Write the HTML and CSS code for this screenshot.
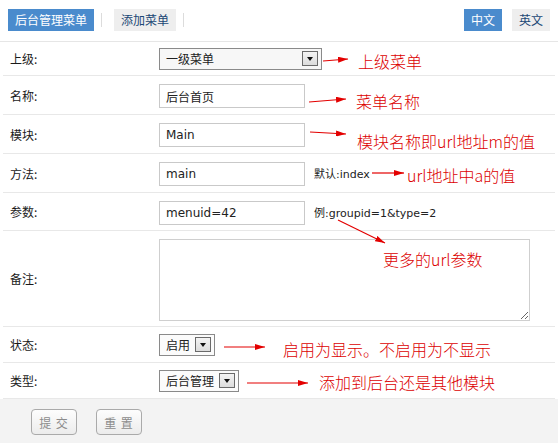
FILE: index.html
```html
<!DOCTYPE html>
<html lang="zh-CN">
<head>
<meta charset="utf-8">
<title>添加菜单</title>
<link rel="stylesheet" href="styles.css">
</head>
<body>
<div class="page">
  <div class="topbar">
    <div class="tabs">
      <a class="tab tab-on">后台管理菜单</a>
      <span class="sep"></span>
      <a class="tab">添加菜单</a>
      <span class="sep"></span>
    </div>
    <div class="langs">
      <a class="tab tab-on">中文</a>
      <a class="tab">英文</a>
    </div>
  </div>

  <div class="form">
    <div class="row row-first">
      <div class="label">上级:</div>
      <div class="field">
        <div class="select select-wide"><span class="select-text">一级菜单</span><span class="select-btn"></span></div>
      </div>
    </div>
    <div class="row">
      <div class="label">名称:</div>
      <div class="field"><input class="input" type="text" value="后台首页"></div>
    </div>
    <div class="row">
      <div class="label">模块:</div>
      <div class="field"><input class="input" type="text" value="Main"></div>
    </div>
    <div class="row">
      <div class="label">方法:</div>
      <div class="field"><input class="input" type="text" value="main"><span class="hint">默认:index</span></div>
    </div>
    <div class="row row-mid">
      <div class="label">参数:</div>
      <div class="field"><input class="input" type="text" value="menuid=42"><span class="hint">例:groupid=1&amp;type=2</span></div>
    </div>
    <div class="row row-tall">
      <div class="label">备注:</div>
      <div class="field"><textarea class="textarea"></textarea></div>
    </div>
    <div class="row row-short">
      <div class="label">状态:</div>
      <div class="field">
        <div class="select"><span class="select-text">启用</span><span class="select-btn"></span></div>
      </div>
    </div>
    <div class="row row-short">
      <div class="label">类型:</div>
      <div class="field">
        <div class="select"><span class="select-text">后台管理</span><span class="select-btn"></span></div>
      </div>
    </div>
  </div>

  <div class="footer">
    <button class="btn" type="button">提 交</button>
    <button class="btn" type="button">重 置</button>
  </div>

  <!-- red notes written over the form -->
  <div class="notes">
    <svg class="arrows" width="558" height="443" viewBox="0 0 558 443">
      <defs>
        <marker id="head" markerWidth="10" markerHeight="6" refX="10" refY="3" orient="auto" markerUnits="userSpaceOnUse">
          <path d="M0,0 L10,3 L0,6 Z" fill="#e30000"/>
        </marker>
      </defs>
      <g stroke="#e30000" stroke-width="1.2" fill="none" marker-end="url(#head)">
        <line x1="323" y1="61" x2="348" y2="59"/>
        <line x1="309" y1="102" x2="346" y2="99"/>
        <line x1="310" y1="132" x2="346" y2="134"/>
        <line x1="372" y1="173" x2="404" y2="173"/>
        <line x1="338" y1="220" x2="385" y2="243"/>
        <line x1="224" y1="347" x2="265" y2="347"/>
        <line x1="247" y1="383" x2="308" y2="383"/>
      </g>
    </svg>
    <span class="note note-1">上级菜单</span>
    <span class="note note-2">菜单名称</span>
    <span class="note note-3">模块名称即url地址m的值</span>
    <span class="note note-4">url地址中a的值</span>
    <span class="note note-5">更多的url参数</span>
    <span class="note note-6">启用为显示。不启用为不显示</span>
    <span class="note note-7">添加到后台还是其他模块</span>
  </div>
</div>
</body>
</html>
```

FILE: styles.css
```css
* { box-sizing: border-box; }

html, body {
  margin: 0;
  padding: 0;
  background: #fff;
}

body {
  font-family: "Noto Sans CJK SC", "DejaVu Sans", sans-serif;
  font-size: 12px;
  color: #333;
}

.page {
  position: relative;
  width: 558px;
  height: 443px;
  overflow: hidden;
}

/* top tab bar */
.topbar {
  height: 42px;
  padding: 9px 8px 0 8px;
  display: flex;
  justify-content: space-between;
  align-items: flex-start;
  border-bottom: 1px solid #e6e6e6;
}

.tabs, .langs {
  display: flex;
  align-items: center;
}

.langs { gap: 10px; }

.tab {
  display: inline-flex;
  align-items: center;
  height: 22px;
  padding: 0 7px;
  font-size: 12px;
  line-height: 22px;
  color: #1b4775;
  background: #eeeeee;
  text-decoration: none;
}

.tab-on {
  background: #4a8bcd;
  color: #fff;
}

.sep {
  display: inline-block;
  width: 1px;
  height: 14px;
  margin: 0 12px 0 7px;
  background: #dcdcdc;
}

/* form rows */
.form {
  margin: 0 3px;
}

.row {
  display: grid;
  grid-template-columns: 156px 1fr;
  align-items: center;
  height: 39px;
  border-bottom: 1px solid #e8e8e8;
}

.row-first { height: 34px; }
.row-mid { height: 38px; }
.row-tall { height: 96px; }
.row-short { height: 36px; }

.label {
  padding-left: 7px;
  color: #1a1a1a;
}

.field {
  display: flex;
  align-items: center;
}

.input {
  width: 146px;
  height: 24px;
  margin: 2px 0 0 0;
  padding: 0 6px;
  border: 1px solid #c9c9c9;
  font-family: "DejaVu Sans", "Noto Sans CJK SC", sans-serif;
  font-size: 12px;
  color: #222;
  background: #fff;
  outline: none;
}

.hint {
  margin-left: 9px;
  font-family: "DejaVu Sans", "Noto Sans CJK SC", sans-serif;
  font-size: 11px;
  color: #222;
  white-space: nowrap;
}

.textarea {
  display: block;
  width: 371px;
  height: 82px;
  margin-top: 2px;
  border: 1px solid #cfcfcf;
  resize: both;
  outline: none;
}

/* drop-down look */
.select {
  display: inline-flex;
  align-items: center;
  height: 22px;
  padding: 0 3px 0 6px;
  border: 1px solid #8a8a8a;
  background: #fbfbfb;
  color: #222;
}

.select-wide {
  width: 163px;
  justify-content: space-between;
  background: #f7f7f7;
}

.select-text {
  margin-right: 5px;
  font-size: 12px;
}

.select-btn {
  position: relative;
  width: 16px;
  height: 15px;
  border: 1px solid #6a6a6a;
  background: linear-gradient(#f4f4f4, #dcdcdc);
}

.select-btn::after {
  content: "";
  position: absolute;
  left: 4px;
  top: 5px;
  border-left: 3px solid transparent;
  border-right: 3px solid transparent;
  border-top: 4px solid #111;
}

/* bottom action strip */
.footer {
  height: 45px;
  padding: 10px 0 0 31px;
  display: flex;
  align-items: flex-start;
  gap: 19px;
  background: #f3f3f3;
}

.btn {
  width: 46px;
  height: 26px;
  padding: 0;
  border: 1px solid #aaaaaa;
  border-radius: 4px;
  background: linear-gradient(#fdfdfd, #ececec);
  font-family: "Noto Sans CJK SC", sans-serif;
  font-size: 12px;
  letter-spacing: 1px;
  color: #8c8c8c;
}

/* red notes */
.notes {
  position: absolute;
  left: 0;
  top: 0;
  width: 558px;
  height: 443px;
  pointer-events: none;
}

.arrows {
  position: absolute;
  left: 0;
  top: 0;
}

.note {
  position: absolute;
  font-family: "Noto Sans CJK SC", sans-serif;
  font-size: 16px;
  font-weight: 300;
  line-height: 18px;
  color: #dc0000;
  white-space: nowrap;
}

.note-1 { left: 358px; top: 52px; }
.note-2 { left: 356px; top: 92px; }
.note-3 { left: 357px; top: 132px; }
.note-4 { left: 407px; top: 166px; }
.note-5 { left: 383px; top: 250px; }
.note-6 { left: 283px; top: 340px; }
.note-7 { left: 319px; top: 373px; }
```
